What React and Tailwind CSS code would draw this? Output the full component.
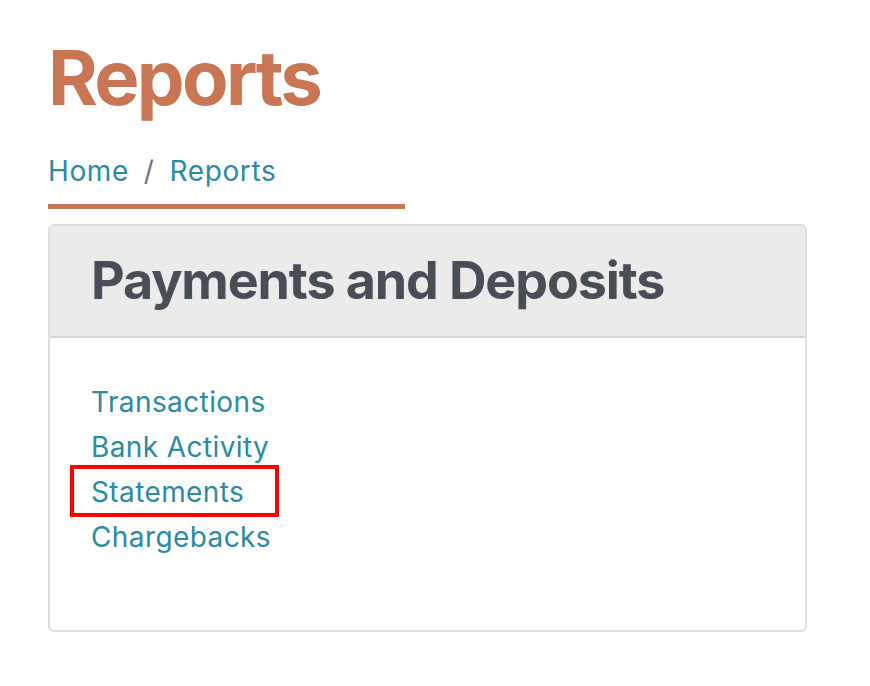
import React from 'react';

const links = ['Transactions', 'Bank Activity', 'Statements', 'Chargebacks'];

export default function App() {
  return (
    <div className="min-h-screen bg-white pl-[48px] pt-[39px] font-['Inter',sans-serif]">
      <h1 className="text-[76px] font-bold leading-[76px] tracking-[-2.7px] text-[#c87654]">Reports</h1>

      <nav className="mt-[38px] text-[28px] leading-[36px] tracking-[0.6px]">
        <a href="#" className="text-[#2b8ba1]">Home</a>
        <span className="mx-[15px] text-[#6c737a]">/</span>
        <a href="#" className="text-[#2b8ba1]">Reports</a>
      </nav>
      <div className="mt-[15px] h-[5px] w-[357px] bg-[#c87654]" />

      <div className="mt-[15px] w-[759px] overflow-hidden rounded-[6px] border-2 border-[#dedede]">
        <div className="border-b-2 border-[#d4d4d4] bg-[#ebebeb] px-[41px] py-[24px]">
          <h2 className="text-[52px] font-bold leading-[62px] tracking-[-1.1px] text-[#474e57]">
            Payments and Deposits
          </h2>
        </div>
        <ul className="px-[41px] pb-[70px] pt-[42px] text-[28px] leading-[45px] tracking-[0.4px]">
          {links.map((l) => (
            <li key={l}>
              <a href="#" className="relative inline-block text-[#2b8ba1]">
                {l}
                {l === 'Statements' && (
                  <span className="pointer-events-none absolute left-[-21px] top-[-5px] h-[52px] w-[209px] border-[4px] border-[#ff0000]" />
                )}
              </a>
            </li>
          ))}
        </ul>
      </div>
    </div>
  );
}
